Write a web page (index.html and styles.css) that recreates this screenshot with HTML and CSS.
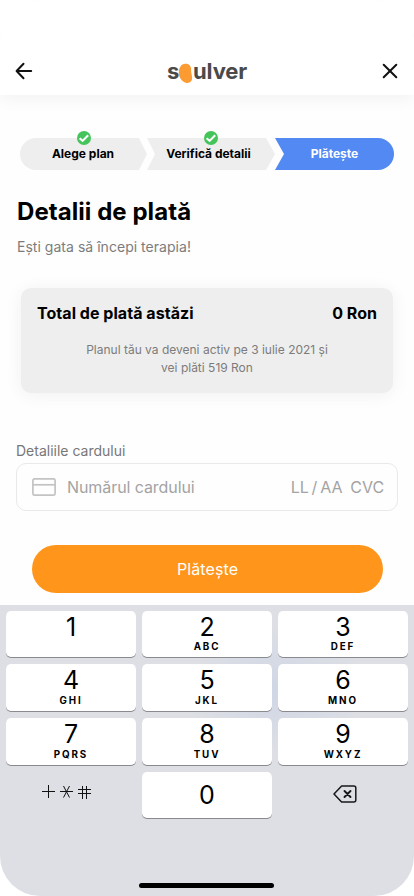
FILE: index.html
```html
<!DOCTYPE html>
<html lang="ro">
<head>
<meta charset="utf-8">
<meta name="viewport" content="width=device-width, initial-scale=1">
<title>Detalii de plată</title>
<link rel="stylesheet" href="styles.css">
</head>
<body>
<div class="screen">
  <header class="header">
    <svg class="icon" width="18" height="18" viewBox="0 0 18 18"><path d="M8.500 1.700 1.600 9l6.900 7.300M1.800 9H16.200"/></svg>
    <div class="logo"><span>s</span><svg class="bean" width="15" height="21" viewBox="0 0 15 21"><path d="M7.200.8c4.200-.2 6 2.500 5.900 6.200-.1 3 .9 4.800 1 7.600.1 3.800-2.200 5.700-5.600 5.300C4.500 19.400.8 15 .8 9.800.8 4.600 3.200 1 7.200.8z"/></svg><span>ulver</span></div>
    <svg class="icon" width="18" height="18" viewBox="0 0 18 18"><path d="M2.700 2.700l12.600 12.600M15.300 2.700L2.700 15.300"/></svg>
  </header>

  <main class="content">
    <ol class="steps">
      <li class="step first"><span>Alege plan</span>
        <svg class="check" width="14" height="14" viewBox="0 0 14 14"><circle cx="7" cy="7" r="7"/><path d="M2.600 7.200l3 2.700 5.600-5.700"/></svg></li>
      <li class="step middle"><span>Verifică detalii</span>
        <svg class="check" width="14" height="14" viewBox="0 0 14 14"><circle cx="7" cy="7" r="7"/><path d="M2.600 7.200l3 2.700 5.600-5.700"/></svg></li>
      <li class="step last"><span>Plătește</span></li>
    </ol>

    <h1 class="title">Detalii de plată</h1>
    <p class="subtitle">Ești gata să începi terapia!</p>

    <section class="total">
      <div class="total-row"><span>Total de plată astăzi</span><span>0 Ron</span></div>
      <p class="total-note">Planul tău va deveni activ pe 3 iulie 2021 și<br>vei plăti 519 Ron</p>
    </section>

    <div class="label">Detaliile cardului</div>
    <div class="field">
      <svg class="card" width="24" height="18" viewBox="0 0 24 18"><rect x=".9" y=".8" width="22.200" height="16.400" rx="1.800"/><path d="M1 6.800h22"/></svg>
      <span class="number">Numărul cardului</span>
      <span class="expiry">LL / AA</span>
      <span class="cvc">CVC</span>
    </div>
    <button class="pay">Plătește</button>
  </main>

  <section class="keyboard">
    <div class="keys">
      <div class="key top"><b>1</b></div>
      <div class="key top"><b>2</b><small>ABC</small></div>
      <div class="key top"><b>3</b><small>DEF</small></div>
      <div class="key"><b>4</b><small>GHI</small></div>
      <div class="key"><b>5</b><small>JKL</small></div>
      <div class="key"><b>6</b><small>MNO</small></div>
      <div class="key"><b>7</b><small>PQRS</small></div>
      <div class="key"><b>8</b><small>TUV</small></div>
      <div class="key"><b>9</b><small>WXYZ</small></div>
      <div class="plain"><svg class="symbols" width="50" height="16" viewBox="0 0 50 16"><path d="M0 7.500h13M6.500 1v13M18 7.500h13M21.500 2l6 11.500M27.500 2l-6 11.500M36 5.500h13M36 9.500h13M40.500 2v13M44.500 2v13"/></svg></div>
      <div class="key zero"><b>0</b></div>
      <div class="plain erase"><svg width="24" height="18" viewBox="0 0 24 18"><path d="M8.600.9h12.200a2 2 0 0 1 2 2v12.200a2 2 0 0 1-2 2H8.600L1 9z"/><path class="cross" d="M11.500 6l6 6M17.500 6l-6 6"/></svg></div>
    </div>
    <div class="home"></div>
  </section>
</div>
</body>
</html>
```
FILE: styles.css
```css
* { box-sizing: border-box; }
body { margin: 0; background: #fff; font-family: Inter, "Liberation Sans", sans-serif; color: #000; }
.screen { display: flex; flex-direction: column; width: 414px; height: 896px; overflow: hidden; border-radius: 40px; background: #fefefe; }
svg { display: block; fill: none; flex: none; }

.header { display: flex; align-items: flex-end; justify-content: space-between; height: 95px; padding: 0 15px 15px; background: #fff; box-shadow: 0 4px 16px rgba(0, 0, 0, .05); }
.icon { stroke: #111; stroke-width: 2; stroke-linecap: round; stroke-linejoin: round; }
.logo { display: flex; align-items: center; height: 18px; font-size: 22px; font-weight: 700; line-height: 22px; letter-spacing: -.15px; color: #4a4a4a; }
.bean { margin: 4px 0 0 -1px; fill: #fb9b31; }

.content { display: flex; flex-direction: column; height: 510px; padding: 43px 16px 0; }
.steps { display: flex; margin: 0 4px; padding: 0; list-style: none; }
.step { position: relative; height: 32px; font-size: 12px; font-weight: 700; line-height: 32px; text-align: center; }
.step::before { content: ""; position: absolute; inset: 0; background: #eee; }
.step span { position: relative; }
.first { width: 127px; padding-right: 1px; }
.first::before { border-radius: 16px 0 0 16px; clip-path: polygon(0 0, 119px 0, 100% 50%, 119px 100%, 0 100%); }
.middle { width: 128px; padding-right: 5px; }
.middle::before { clip-path: polygon(0 0, 119px 0, 100% 50%, 119px 100%, 0 100%, 8px 50%); }
.last { width: 119px; color: #fff; }
.last::before { background: #5289f3; border-radius: 0 16px 16px 0; clip-path: polygon(0 0, 100% 0, 100% 100%, 0 100%, 9px 50%); }
.check { position: absolute; top: -7px; left: 57px; fill: #44c45a; }
.check path { fill: none; stroke: #fff; stroke-width: 2.100; }

.title { margin: 27px 0 0 1px; font-size: 24px; font-weight: 700; line-height: 30px; letter-spacing: .06px; }
.subtitle { margin: 10px 0 0 1px; font-size: 14px; line-height: 20px; letter-spacing: .03px; color: #7c7c7c; }
.total { height: 105px; margin: 31px 5px 0; padding: 15px 16px 0; border-radius: 10px; background: #eee; box-shadow: 0 2px 18px rgba(0, 0, 0, .06); }
.total-row { display: flex; justify-content: space-between; font-size: 16px; font-weight: 700; line-height: 20px; letter-spacing: .04px; }
.total-note { margin: 18px 0 0; font-size: 12px; line-height: 18px; text-align: center; color: #7c7c7c; }
.label { margin-top: 48px; font-size: 14px; line-height: 20px; color: #777; }
.field { display: flex; align-items: center; height: 48px; margin-top: 2px; padding: 0 13px 0 15px; border: 1px solid #e9e9e9; border-radius: 10px; font-size: 16px; font-weight: 400; letter-spacing: -.08px; color: #a3a3a3; }
.card { stroke: #c3c3c3; stroke-width: 1.700; }
.number { margin-left: 11px; }
.expiry { margin-left: auto; word-spacing: -1.500px; }
.cvc { margin-left: 8px; }
.pay { height: 48px; margin: 34px 15px 0 16px; padding: 0; border: 0; border-radius: 24px; background: #ff951a; font: 400 16px/48px Inter, sans-serif; letter-spacing: .1px; color: #fff; }

.keyboard { display: flex; flex-direction: column; align-items: center; flex: 1; padding: 6px; background: radial-gradient(ellipse 90px 65px at 278px 85px, #cfd6e5, #dddfe4); }
.keys { display: grid; grid-template-columns: repeat(3, 130px); grid-template-rows: 46px 47px 47px 46px; gap: 7px 6px; }
.key { display: flex; flex-direction: column; align-items: center; padding-top: 1px; border-radius: 5px; background: #fff; box-shadow: 0 1px 0 #898a8d; }
.key b { height: 31px; font-size: 25px; font-weight: 400; line-height: 31px; }
.key.top b { height: 30px; line-height: 30px; }
.key small { font-size: 9.800px; font-weight: 700; line-height: 10px; letter-spacing: 1.900px; }
.zero { justify-content: center; padding: 0; }
.plain { display: flex; justify-content: center; padding-top: 12px; }
.symbols { margin-right: 8px; stroke: #111; stroke-width: 1; }
.erase { padding: 13px 0 0 4px; }
.erase svg { stroke: #181818; stroke-width: 1.500; stroke-linecap: round; stroke-linejoin: round; }
.erase .cross { stroke-width: 1.900; }
.home { width: 135px; height: 5px; margin: auto 2px 2px 0; border-radius: 3px; background: #000; }
```
